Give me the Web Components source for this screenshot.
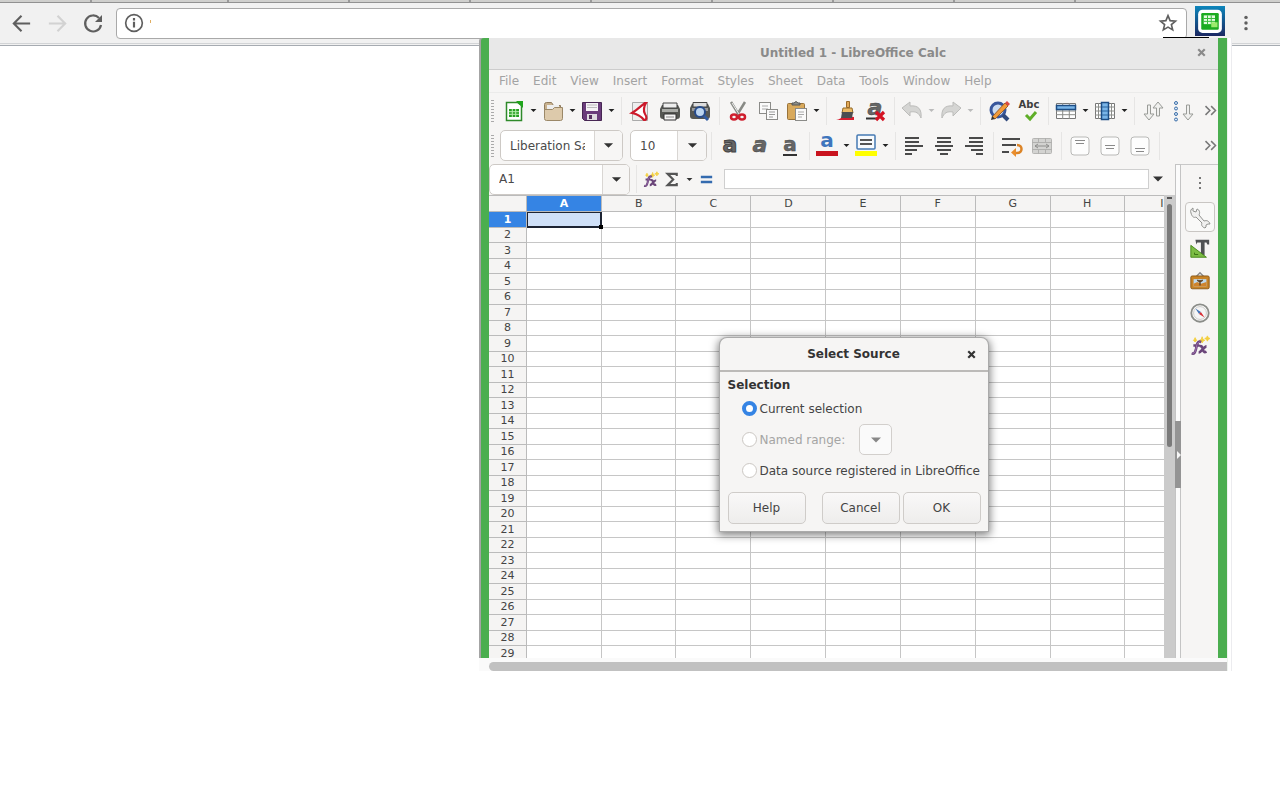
<!DOCTYPE html>
<html lang="en">
<head>
<meta charset="utf-8">
<title>LibreOffice Calc</title>
<style>
html,body{margin:0;height:100%;background:#fff}
body{position:relative;font:12px "DejaVu Sans","Liberation Sans",sans-serif;color:#444;overflow:hidden}
calc-popup{position:absolute;top:38px;right:52px;width:min(749px,calc(100% - 60px))}
</style>
</head>
<body>
<browser-bar></browser-bar>
<calc-popup>
  <title-bar heading="Untitled 1 - LibreOffice Calc"></title-bar>
  <menu-bar items="File,Edit,View,Insert,Format,Styles,Sheet,Data,Tools,Window,Help"></menu-bar>
  <tool-bar>
    <tool-button icon="new" label="New" arrow></tool-button>
    <tool-button icon="open" label="Open" arrow></tool-button>
    <tool-button icon="save" label="Save" arrow></tool-button>
    <tool-sep></tool-sep>
    <tool-button icon="pdf" label="Export as PDF"></tool-button>
    <tool-button icon="print" label="Print"></tool-button>
    <tool-button icon="preview" label="Print preview"></tool-button>
    <tool-sep></tool-sep>
    <tool-button icon="cut" label="Cut"></tool-button>
    <tool-button icon="copy" label="Copy"></tool-button>
    <tool-button icon="paste" label="Paste" arrow></tool-button>
    <tool-sep></tool-sep>
    <tool-button icon="brush" label="Clone formatting"></tool-button>
    <tool-button icon="clear" label="Clear formatting"></tool-button>
    <tool-sep></tool-sep>
    <tool-button icon="undo" label="Undo" arrow disabled></tool-button>
    <tool-button icon="redo" label="Redo" arrow disabled></tool-button>
    <tool-sep></tool-sep>
    <tool-button icon="find" label="Find and replace"></tool-button>
    <tool-button icon="spell" label="Spelling"></tool-button>
    <tool-sep></tool-sep>
    <tool-button icon="row" label="Row" arrow></tool-button>
    <tool-button icon="column" label="Column" arrow></tool-button>
    <tool-sep></tool-sep>
    <tool-button icon="sort" label="Sort"></tool-button>
    <tool-button icon="sortasc" label="Sort ascending"></tool-button>
    <tool-more slot="end"></tool-more>
  </tool-bar>
  <tool-bar>
    <combo-box slot="start" label="Font name" value="Liberation Sans" style="--field:93px;--drop:28px;margin-right:7px"></combo-box>
    <combo-box slot="start" label="Font size" value="10" style="--field:46px;--drop:29px"></combo-box>
    <tool-sep></tool-sep>
    <tool-button icon="bold" label="Bold"></tool-button>
    <tool-button icon="italic" label="Italic"></tool-button>
    <tool-button icon="underline" label="Underline"></tool-button>
    <tool-sep></tool-sep>
    <tool-button icon="fontcolor" label="Font color" arrow></tool-button>
    <tool-button icon="highlight" label="Background color" arrow></tool-button>
    <tool-sep></tool-sep>
    <tool-button icon="left" label="Align left"></tool-button>
    <tool-button icon="center" label="Align center"></tool-button>
    <tool-button icon="right" label="Align right"></tool-button>
    <tool-sep></tool-sep>
    <tool-button icon="wrap" label="Wrap text"></tool-button>
    <tool-button icon="merge" label="Merge cells"></tool-button>
    <tool-sep></tool-sep>
    <tool-button icon="vtop" label="Align top"></tool-button>
    <tool-button icon="vmid" label="Center vertically"></tool-button>
    <tool-button icon="vbot" label="Align bottom"></tool-button>
    <tool-sep></tool-sep>
    <tool-more slot="end"></tool-more>
  </tool-bar>
  <work-area>
    <formula-bar></formula-bar>
    <sheet-grid></sheet-grid>
    <side-bar slot="side"></side-bar>
  </work-area>
  <source-dialog slot="dialog"></source-dialog>
</calc-popup>

<script>
const doc = (x, y, w, h) => `<rect x="${x}" y="${y}" width="${w}" height="${h}" fill="#fafafa" stroke="#8b8b88"/>`;
const lines = (rows) => rows.map(([x, y, w]) => `<path d="M${x} ${y}h${w}" stroke="#4a4a4a" stroke-width="2"/>`).join('');
const letter = (extra, size, fill, y) => `<text x="12" y="${y}" text-anchor="middle" font-family="DejaVu Sans" font-weight="bold" font-size="${size}" fill="${fill}" ${extra}>a</text>`;
const vbox = (y) => `<rect x="3" y="3" width="18" height="18" rx="3" fill="#fdfdfd" stroke="#b9b9b7"/><path d="M7 ${y}h10M8 ${y + 3}h8" stroke="#8a8a8a"/>`;
const fx = `<path d="M14 5l1-3 1 3 2 1-2 1-1 2-1-2-2-1zM20 3l1-2 1 2 2 1-2 1-1 2-1-2-2-1zM6 5l1-2 1 2 1 1-1 1-1 1-1-1-1-1z" fill="#f3cf3d" stroke="#f3cf3d"/><path d="M3 21c3 1 4-1 5-5l1-5c1-3 2-4 5-3M5 12h7M12 13c3-1 3 1 4 4s2 3 4 2M20 13c-3 0-6 7-9 7" fill="none" stroke="#6b467a" stroke-width="3"/><path d="M4 21c3 0 3-2 4-5l1-5c1-2 2-3 4-3" fill="none" stroke="#a272b5"/>`;
const ICONS = {
  new: `<path d="M4.500 3.500h11l4 3v15h-15z" fill="#fff" stroke="#2f8a2a" stroke-width="1.500"/><path d="M14 2h7v7z" fill="#20a51c"/><path d="M7 10h10v8H7z" fill="#279f22"/><path d="M7 12.700h10M7 15.300h10M10.300 10v8M13.700 10v8" stroke="#b9eeb0"/>`,
  open: `<path d="M3.500 19V5.500q0-2 2-2h5l2 3h7v4" fill="#c9b28f" stroke="#8f7a5c"/><path d="M6 6h12v8H6z" fill="#eee"/><path d="M3.500 10.500h8l2-2h8v11q0 2-2 2h-14q-2 0-2-2z" fill="#ddcaab" stroke="#9b8868"/>`,
  save: `<path d="M2.500 3.500h19v18h-17l-2-2z" fill="#6a3c7b" stroke="#472653"/><path d="M6 4h12v8H6z" fill="#f6f3f6"/><path d="M7 6h10M7 8.500h10" stroke="#bbb"/><path d="M7 15h10v6H7z" fill="#dedbe0"/><path d="M9 16h3v4H9z" fill="#55305f"/>`,
  pdf: `<path d="M4.500 3.500h15v18h-15z" fill="#eee" stroke="#aaa"/><path d="M17 4C13 7 9 11 4 14c5 1 9 3 12 7 3 0 3-3 1-6s-1-8 1-11z" fill="#fff" stroke="#cc1a2b" stroke-width="2.200"/>`,
  print: `<path d="M4 6h16l2 4v7q0 3-3 3H5q-3 0-3-3v-7z" fill="#555753"/><path d="M5 4h14v5H5z" fill="#eee" stroke="#444"/><path d="M4 10h16v3H4z" fill="#aaaca8"/><path d="M6 15h12v6H6z" fill="#f6f6f6" stroke="#333"/><path d="M8 18h8" stroke="#888"/>`,
  preview: `<path d="M4 5h16l2 4v8q0 3-3 3H5q-3 0-3-3V9z" fill="#555753"/><path d="M5 3.500h14V8H5z" fill="#ddd" stroke="#444"/><path d="M4 9h16v3H4z" fill="#999"/><circle cx="12" cy="13" r="5" fill="#bcd5ef" stroke="#264b8c" stroke-width="2"/><path d="M16 17l4 4" stroke="#315ba0" stroke-width="3"/>`,
  cut: `<path d="M5 3l8 13M19 3l-8 13" stroke="#888a85" stroke-width="2.500"/><path d="M6 4l7 11" stroke="#eee"/><ellipse cx="8" cy="18" rx="3" ry="2.500" fill="none" stroke="#cf1f2e" stroke-width="2.500"/><ellipse cx="16" cy="18" rx="3" ry="2.500" fill="none" stroke="#cf1f2e" stroke-width="2.500"/>`,
  copy: doc(3.5, 3.500, 11, 11) + `<path d="M6 7h6M6 10h6" stroke="#aaa"/>` + doc(10.5, 10.500, 11, 10) + `<path d="M13 13h6M13 15.500h6M13 18h4" stroke="#999"/>`,
  paste: `<rect x="2.500" y="4.500" width="17" height="16" rx="1" fill="#d8a95c" stroke="#99733a"/><path d="M7 6V4h2q2-3 4 0h2v2z" fill="#8d8f8a" stroke="#555"/>` + doc(10.5, 9.500, 11, 12) + `<path d="M13 13h6M13 15.500h6M13 18h4" stroke="#aaa"/>`,
  brush: `<path d="M3 21q5-1 7-4l11 1v3z" fill="#d81e30"/><path d="M13.500 2.500h3v6h-3z" fill="#e2a958" stroke="#9b6b28"/><path d="M10 9h9l1 5H9z" fill="#edbb66" stroke="#946a28"/><path d="M9 13h11l-1 6H8z" fill="#4c4e51"/>`,
  clear: letter('font-style="italic" stroke="#444" stroke-width=".5"', 22, '#666', 16) + `<path d="M3 19.500h12" stroke="#333" stroke-width="2"/><path d="M13 13l8 8M21 13l-8 8" stroke="#d41324" stroke-width="3.200"/>`,
  undo: `<path d="M2 9l8-6v4c8-1 12 3 11 12-2-5-5-7-11-6v4z" fill="#d5d5d3" stroke="#bcbcba"/>`,
  redo: `<path d="M22 9l-8-6v4C6 6 2 10 3 19c2-5 5-7 11-6v4z" fill="#d5d5d3" stroke="#bcbcba"/>`,
  find: `<circle cx="11" cy="11" r="7" fill="#ccdcf1" stroke="#38569b" stroke-width="3"/><path d="M16 16l5 5" stroke="#30497c" stroke-width="4"/><path d="M5 18L18 4l3 3L8 20z" fill="#f29a38" stroke="#9b612c"/><path d="M4 21l1-4 3 3z" fill="#333"/><path d="M18 4l2-2 3 3-2 2z" fill="#dc4a42"/>`,
  spell: `<text x="12" y="9" text-anchor="middle" font-family="DejaVu Sans" font-weight="bold" font-size="10" fill="#3d3d3d">Abc</text><path d="M9 16l4 4 6-7" fill="none" stroke="#5fae28" stroke-width="3"/>`,
  row: `<path d="M2.500 4.500h19v15h-19z" fill="#fff" stroke="#777"/><path d="M2 12h20M2 15.700h20M8.700 4v16M15.300 4v16" stroke="#8b8d89"/><path d="M2.500 6.500h19v4h-19z" fill="#79b5e8" stroke="#1c4d85" stroke-width="1.500"/>`,
  column: `<path d="M2.500 4.500h19v15h-19z" fill="#fff" stroke="#777"/><path d="M2 8h20M2 12h20M2 16h20M5.500 4v16M18.500 4v16" stroke="#8b8d89"/><path d="M8.500 3.500h7v17h-7z" fill="#79b5e8" stroke="#1c4d85" stroke-width="1.500"/><path d="M9 8h6M9 12h6M9 16h6" stroke="#2d649e"/>`,
  sort: `<path d="M6.500 6h3v9h3.500l-5 6-5-6h3.500zM15.500 17h3V9H22l-5-6-5 6h3.500z" fill="#f0f0ee" stroke="#999b97"/>`,
  sortasc: `<path d="M15.500 6h3v9H22l-5 6-5-6h3.500z" fill="#f0f0ee" stroke="#999b97"/><g fill="#dbe9f7" stroke="#3b6ea8"><circle cx="5" cy="4" r="1.500"/><circle cx="5" cy="9.500" r="1.500"/><circle cx="5" cy="15" r="1.500"/><circle cx="5" cy="20.500" r="1.500"/></g>`,
  bold: letter('stroke="#444" stroke-width="1"', 22, '#666', 18),
  italic: letter('font-style="italic" stroke="#444" stroke-width=".5"', 22, '#666', 18),
  underline: letter('stroke="#444" stroke-width=".5"', 20, '#666', 17) + `<path d="M5 21h14" stroke="#333" stroke-width="2"/>`,
  fontcolor: letter('', 20, '#3f76bd', 13) + `<path d="M1 19.500h22" stroke="#c9131e" stroke-width="5"/>`,
  highlight: `<rect x="3" y="1" width="18" height="14" rx="1" fill="#f7fafd" stroke="#4579b2" stroke-width="1.500"/><path d="M6 6h12M6 10h12" stroke="#555" stroke-width="2"/><path d="M1 19.500h22" stroke="#ff0" stroke-width="5"/>`,
  left: lines([[3, 4, 14], [3, 8, 14], [3, 12, 18], [3, 16, 12], [3, 20, 7]]),
  center: lines([[5, 4, 14], [5, 8, 14], [3, 12, 18], [5, 16, 14], [8, 20, 8]]),
  right: lines([[7, 4, 14], [7, 8, 14], [3, 12, 18], [9, 16, 12], [14, 20, 7]]),
  wrap: lines([[2, 5, 18], [2, 11, 14], [2, 18, 7]]) + `<path d="M17 11c6 0 6 8 0 8h-3" fill="none" stroke="#dc8426" stroke-width="2.500"/><path d="M16 14v9l-5-4.500z" fill="#e98d2c"/>`,
  merge: `<rect x="2.500" y="4.500" width="19" height="15" rx="1" fill="#d3d3d1" stroke="#b5b5b3"/><path d="M2 8.500h20M2 15.500h20M8.500 4v4M15.500 4v4M8.500 16v4M15.500 16v4" stroke="#b0b0ae"/><path d="M5 12h14M8 10l-3 2 3 2M16 10l3 2-3 2" fill="none" stroke="#8e8e8c"/>`,
  vtop: vbox(6.500), vmid: vbox(11.500), vbot: vbox(14.500),
  fx,
  sum: `<path d="M18 7V4H5l8 8-8 8h13v-3" fill="none" stroke="#555" stroke-width="3"/>`,
  equals: `<path d="M4 8.500h16M4 15.500h16" stroke="#346baf" stroke-width="3.500"/>`,
  wrench: `<path d="M3 8c-1-2 0-4 2-5l0 3 3 1 1-3c3 1 3 4 2 6l5 6c3-1 5 0 6 3l-2 0-2 1 0 2-1 1c-3-1-4-3-3-5l-6-6c-2 1-4 0-5-4z" fill="#f1f1f0" stroke="#929390"/>`,
  styles: `<path d="M7 2h15v5h-2l-1-2h-2v14h-4V5H9L8 7z" fill="#505254"/><path d="M2 8v13h17z" fill="#7cbc44" stroke="#458718"/><path d="M6 16v2h4" fill="none" stroke="#376d12"/>`,
  gallery: `<path d="M8 7l4-4 4 4" fill="none" stroke="#888" stroke-width="1.500"/><rect x="2" y="6.500" width="20" height="14" rx="1.500" fill="#c88325" stroke="#885515"/><path d="M5 10h14v8H5z" fill="#bed9ed"/><path d="M5 15l4-2 4 2 6-2v5H5z" fill="#cf842d"/><path d="M12 17v-6M9 11l3 2 3-2" stroke="#5b4023" fill="none" stroke-width="1.500"/>`,
  navigator: `<circle cx="12" cy="12" r="9.500" fill="#fafafa" stroke="#8b8d89" stroke-width="2"/><circle cx="12" cy="12" r="7" fill="#f5f5f5" stroke="#c8c8c6"/><path d="M7 7l6 4-2 2z" fill="#4173b8"/><path d="M17 17l-6-4 2-2z" fill="#d92b31"/>`,
  back: `<path d="M21 12H4M12 4l-8 8 8 8" fill="none" stroke="#5f5f5f" stroke-width="2.200"/>`,
  forward: `<path d="M3 12h17M12 4l8 8-8 8" fill="none" stroke="#d2d2d2" stroke-width="2.200"/>`,
  reload: `<path d="M18 7A8 8 0 1 0 20 14" fill="none" stroke="#5f5f5f" stroke-width="2.200"/><path d="M21 4v7h-7z" fill="#5f5f5f"/>`,
  info: `<circle cx="12" cy="12" r="10" fill="none" stroke="#5f5f5f" stroke-width="2"/><path d="M12 6v3M12 10.500v7" stroke="#5f5f5f" stroke-width="2.600"/>`,
  star: `<path d="M12 4l2.300 5.400 5.900.500-4.500 3.900 1.400 5.700-5.100-3-5.100 3 1.400-5.700-4.500-3.900 5.900-.500z" fill="none" stroke="#5f5f5f" stroke-width="1.800"/>`,
  dots: `<circle cx="12" cy="4.500" r="2.300" fill="#5f5f5f"/><circle cx="12" cy="12" r="2.300" fill="#5f5f5f"/><circle cx="12" cy="19.500" r="2.300" fill="#5f5f5f"/>`,
  smalldots: `<path d="M11 6h2v2h-2zM11 11h2v2h-2zM11 16h2v2h-2z" fill="#777"/>`,
  chevrons: `<path d="M4 5l7 7-7 7M13 5l7 7-7 7" fill="none" stroke="#777" stroke-width="2.400"/>`,
  close: `<path d="M6 6l12 12M18 6L6 18" stroke="currentColor" stroke-width="4"/>`,
  caret: `<path d="M2 7h20l-10 10z" fill="currentColor"/>`,
  extension: `<defs><linearGradient id="b" x2="0" y2="1"><stop stop-color="#0d86bb"/><stop offset="1" stop-color="#1b2862"/></linearGradient></defs><path d="M0 0h24v24H0z" fill="url(#b)"/><rect x="2.500" y="3" width="19" height="18.500" rx="3.500" fill="#fff"/><rect x="5" y="5.500" width="14" height="13.500" rx="1" fill="#1bab20"/><path d="M7 7.500h9v7H7z" fill="#e4fbe0"/><path d="M7 10h9M7 12.300h9M10 7.500v7M13 7.500v7" stroke="#39bd3c" stroke-width=".8"/><path d="M13 13h5v4h-5z" fill="#9beb6d"/>`
};

class Base extends HTMLElement {
  connectedCallback() {
    if (this.shadowRoot) return;
    this.attachShadow({mode: 'open'}).innerHTML =
      `<style>:host,*{box-sizing:border-box}button,input,select{font:inherit;color:inherit;margin:0;border:0;padding:0;background:none;outline:0}button{display:flex;align-items:center;justify-content:center}${this.css()}</style>${this.html()}`;
  }
  css() { return ''; }
  html() { return ''; }
}
const def = (name, css, html) => customElements.define(name, class extends Base {
  css() { return css; }
  html() { return typeof html === 'function' ? html(this) : html; }
});
const icon = (name, size = 24) => `<ui-icon name="${name}" style="--size:${size}px"></ui-icon>`;

def('ui-icon', `:host{display:block;flex:none;width:var(--size);height:var(--size)}svg{display:block;width:100%;height:100%;overflow:visible}`,
  el => `<svg viewBox="0 0 24 24" aria-hidden="true">${ICONS[el.getAttribute('name')]}</svg>`);

def('browser-bar', `
:host{display:block;height:46px;background:#f1f1f1;border-bottom:1px solid #a6abb1}
.tabs{height:3px;background:#cfcfcd;border-bottom:1px solid #919191;display:flex}
.tabs i{flex:0 0 121px;border-right:2px solid #999}
.tabs i:first-child{flex-basis:92px}.tabs i:nth-child(2){flex-basis:137px}
nav{display:flex;align-items:center;height:41px;border-bottom:1px solid #d2d4d6;padding:0 25px 0 9px}
.nav{width:24px;height:24px;margin-right:12px}
.address{flex:1;display:flex;align-items:center;height:31px;margin:0 8px 0 -1px;background:#fff;border:1px solid #a9a9a9;border-radius:4px;padding:0 7px}
.mark{width:1px;height:3px;background:#e0ae62;margin:0 0 4px 6px}
input{flex:1;min-width:0}
.ext{margin:0 12px 4px 0}`,
`<div class="tabs">${'<i></i>'.repeat(9)}</div>
<nav><button class="nav" aria-label="Back">${icon('back', 23)}</button><button class="nav" aria-label="Forward">${icon('forward', 23)}</button><button class="nav" aria-label="Reload">${icon('reload')}</button>
<div class="address">${icon('info', 20)}<span class="mark"></span><input aria-label="Address"><button aria-label="Bookmark">${icon('star', 22)}</button></div>
<button class="ext" aria-label="LibreOffice Calc">${icon('extension', 30)}</button><button aria-label="Menu">${icon('dots', 18)}</button></nav>`);

def('calc-popup', `
:host{display:block;border-right:1px solid #eef3ee;box-shadow:3px 0 #fff,4px 0 #ececef}
.frame{position:relative;display:flex;flex-direction:column;height:620px;background:#f6f5f4;border:solid #4bae4f;border-width:0 9px 0 8px;margin-left:2px;box-shadow:-2px 0 #a4a4a4;border-top-left-radius:3px}
.dialog{position:absolute;inset:0;display:flex;justify-content:center;align-items:flex-start;padding-top:300px}
.scroll{height:13px;background:#fafafa;padding:4px 0 0 10px}
.scroll i{display:block;height:9px;background:#c1c1c1;border-radius:5px 0 0 5px}
.corner{position:absolute;right:18px;top:-1px;width:46px;height:1px;background:#000}`,
`<div class="frame"><slot></slot><div class="dialog"><slot name="dialog"></slot></div></div><div class="scroll"><i></i></div><span class="corner"></span>`);

def('title-bar', `
:host{flex:none;display:flex;align-items:center;height:32px;background:#e8e8e8;border-bottom:1px solid #ccc;color:#8a8a8a;padding:0 10px 2px 22px}
h1{flex:1;margin:0;text-align:center;font-size:12px}`,
el => `<h1>${el.getAttribute('heading')}</h1><button aria-label="Close">${icon('close', 13)}</button>`);

def('menu-bar', `
:host{flex:none;display:flex;gap:14px;height:23px;padding:0 10px 1px;border-bottom:1px solid #ebebea;color:#a3a3a3}`,
el => el.getAttribute('items').split(',').map(t => `<button>${t}</button>`).join(''));

def('tool-bar', `
:host{flex:none;display:flex;align-items:center;height:35px}
.grip{width:3px;height:22px;margin:0 6px 0 2px;background:repeating-linear-gradient(#aaa 0 1px,transparent 1px 3px)}
.end{margin-left:auto}`,
`<span class="grip"></span><slot name="start"></slot><slot></slot><span class="end"><slot name="end"></slot></span>`);

def('tool-sep', `:host{flex:none;width:1px;height:28px;background:#e6e5e4;margin:0 3px 0 4px}`, '');
def('tool-more', `:host{display:block}`, `<button aria-label="More">${icon('chevrons', 15)}</button>`);

def('tool-button', `
:host{flex:none;display:flex;color:#222}
:host([disabled]){color:#bbb}
button{width:30px;height:30px}
:host([arrow]) .main{width:28px}
.drop{width:11px}`,
el => {
  const off = el.hasAttribute('disabled') ? 'disabled' : '', label = el.getAttribute('label');
  return `<button class="main" aria-label="${label}" ${off}>${icon(el.getAttribute('icon'), 24)}</button>` +
    (el.hasAttribute('arrow') ? `<button class="drop" aria-label="${label} options" ${off}>${icon('caret', 7)}</button>` : '');
});

def('combo-box', `
:host{flex:none;display:flex;height:31px;border:1px solid #cdc9c5;border-radius:5px;background:#fff;overflow:hidden}
input{width:var(--field);padding:0 9px;color:#4a4a4a}
button{width:var(--drop);background:#f7f6f5;border-left:1px solid #d9d6d3;color:#333}`,
el => `<input aria-label="${el.getAttribute('label')}" value="${el.getAttribute('value')}"><button aria-label="${el.getAttribute('label')} list">${icon('caret', 11)}</button>`);

def('work-area', `
:host{flex:1;min-height:0;display:flex}
.main{flex:1;min-width:0;display:flex;flex-direction:column}
.split{flex:none;width:6px;margin-top:1px;border:1px solid #c4c4c4;border-bottom:0;background:#fbfbfb;padding-top:256px}
.split button{width:6px;height:67px;margin-left:-1px;background:#949494;justify-content:end}
.split button::after{content:"";border:solid transparent;border-width:4px 0 4px 4px;border-left-color:#f6f6f6}`,
`<div class="main"><slot></slot></div><div class="split"><button aria-label="Hide sidebar"></button></div><slot name="side"></slot>`);

def('formula-bar', `
:host{flex:none;display:flex;align-items:center;height:32px;padding-right:9px;color:#333}
combo-box{--field:112px;--drop:27px;margin-right:2px}
tool-sep{margin-right:2px}
button{width:22px;height:24px}.arrow{width:12px}.open{width:16px}
.line{flex:1;min-width:0;height:20px;border:1px solid #cfcfcf;background:#fff;margin:0 1px 0 7px}`,
`<combo-box label="Name box" value="A1"></combo-box><tool-sep></tool-sep>
<button aria-label="Function wizard">${icon('fx', 17)}</button><button aria-label="Sum">${icon('sum', 17)}</button><button class="arrow" aria-label="Sum options">${icon('caret', 7)}</button><button aria-label="Formula">${icon('equals', 17)}</button>
<input class="line" aria-label="Formula input"><button class="open" aria-label="Expand formula bar">${icon('caret', 12)}</button>`);

def('sheet-grid', `
:host{flex:1;min-height:0;display:flex;overflow:hidden;font-size:11px;color:#444}
.view{flex:1;min-width:0;overflow:hidden;background:#fff}
table{table-layout:fixed;border-collapse:separate;border-spacing:0;width:711px}
col{width:75px}col.num{width:38px}col.narrow{width:74px}
th,td{padding:0;height:15px;line-height:14px;border:solid #c6c6c6;border-width:0 1px 1px 0;overflow:hidden}
th{font-weight:400;background:#f5f4f3;border-color:#bbb}
tbody tr:nth-child(odd)>*{height:16px;line-height:15px}
thead th{height:17px;line-height:15px;border-top:1px solid #bbb}
th.on{background:#3584e4;color:#fff;font-weight:700}
td.cur{background:#cfe0f8;box-shadow:inset 0 0 0 1px #1d2433;border-color:#1d2433;position:relative;overflow:visible}
td.cur::after{content:"";position:absolute;right:-2px;bottom:-2px;width:4px;height:4px;background:#000}
.bar{flex:none;width:11px;background:#cbcbcb;padding:1px 3px 0 3px}
.bar::before{content:"";display:block;height:2px;margin:1px 0 5px;background:#555}
.bar i{display:block;height:243px;background:#7a7a7a;border-radius:3px}`,
() => {
  const letters = [...'ABCDEFGHI'];
  const cols = letters.map((_, i) => `<col class="${i % 3 === 1 ? 'narrow' : ''}">`).join('');
  const rows = Array.from({length: 29}, (_, r) =>
    `<tr><th scope="row" class="${r ? '' : 'on'}">${r + 1}</th>${letters.map((_, c) => `<td class="${r || c ? '' : 'cur'}"></td>`).join('')}</tr>`).join('');
  return `<div class="view"><table><colgroup><col class="num">${cols}</colgroup><thead><tr><th></th>${letters.map((l, i) => `<th scope="col" class="${i ? '' : 'on'}">${l}</th>`).join('')}</tr></thead><tbody>${rows}</tbody></table></div><div class="bar"><i></i></div>`;
});

def('side-bar', `
:host{flex:none;display:flex;flex-direction:column;align-items:center;width:37px;margin-top:1px;border-top:1px solid #c8c8c8}
button{width:30px;height:32px}
button:first-of-type{height:36px}
.on{height:30px;margin:1px 0;border:1px solid #c9c6c3;border-radius:4px;background:#f9f9f8}`,
`<button aria-label="Sidebar settings">${icon('smalldots', 24)}</button><button class="on" aria-label="Properties">${icon('wrench', 24)}</button><button aria-label="Styles">${icon('styles', 22)}</button><button aria-label="Gallery">${icon('gallery', 22)}</button><button aria-label="Navigator">${icon('navigator', 22)}</button><button aria-label="Functions">${icon('fx', 21)}</button>`);

def('source-dialog', `
:host{display:block;width:268px;background:#f6f5f4;border-radius:7px 7px 0 0;box-shadow:0 0 0 1px #aaa,0 2px 9px 2px rgba(0,0,0,.5);color:#444}
header{display:flex;align-items:center;height:34px;border-bottom:2px solid #bcbab8;padding:0 10px 0 23px;color:#333}
h2{flex:1;margin:0;text-align:center;font-size:12px}
form{padding:6px 7px 7px 8px}
fieldset{border:0;margin:0;padding:0;min-width:0}
legend{font-weight:700;padding:0;line-height:15px;color:#333}
.opt{display:flex;align-items:center;height:31px;padding-left:14px;white-space:nowrap}
.opt input{appearance:none;flex:none;width:15px;height:15px;margin-right:3px;border:1px solid #cbc7c3;border-radius:50%;background:#fff}
.opt input:checked{border:4px solid #3584e4}
.off{color:#a5a5a4}
.pick{position:relative;display:flex;align-items:center;justify-content:center;margin-left:14px;width:33px;height:31px;border:1px solid #d2cfcc;border-radius:5px;background:#fafafa;color:#888}
select{position:absolute;inset:0;width:100%;height:100%;appearance:none}
.actions{display:flex;gap:3px;padding-top:6px}
.actions button{width:78px;height:32px;border:1px solid #cfccc9;border-radius:5px;background:linear-gradient(#f9f8f8,#eeedec)}
.actions button:first-child{margin-right:auto}`,
`<header><h2>Select Source</h2><button aria-label="Close">${icon('close', 13)}</button></header>
<form><fieldset><legend>Selection</legend>
<div class="opt"><input type="radio" name="src" id="cur" checked><label for="cur">Current selection</label></div>
<div class="opt off"><input type="radio" name="src" id="named" disabled><label for="named">Named range:</label><span class="pick">${icon('caret', 12)}<select aria-label="Named range" disabled></select></span></div>
<div class="opt"><input type="radio" name="src" id="reg"><label for="reg">Data source registered in LibreOffice</label></div></fieldset>
<div class="actions"><button type="button">Help</button><button type="button">Cancel</button><button type="button">OK</button></div></form>`);
</script>
</body>
</html>
